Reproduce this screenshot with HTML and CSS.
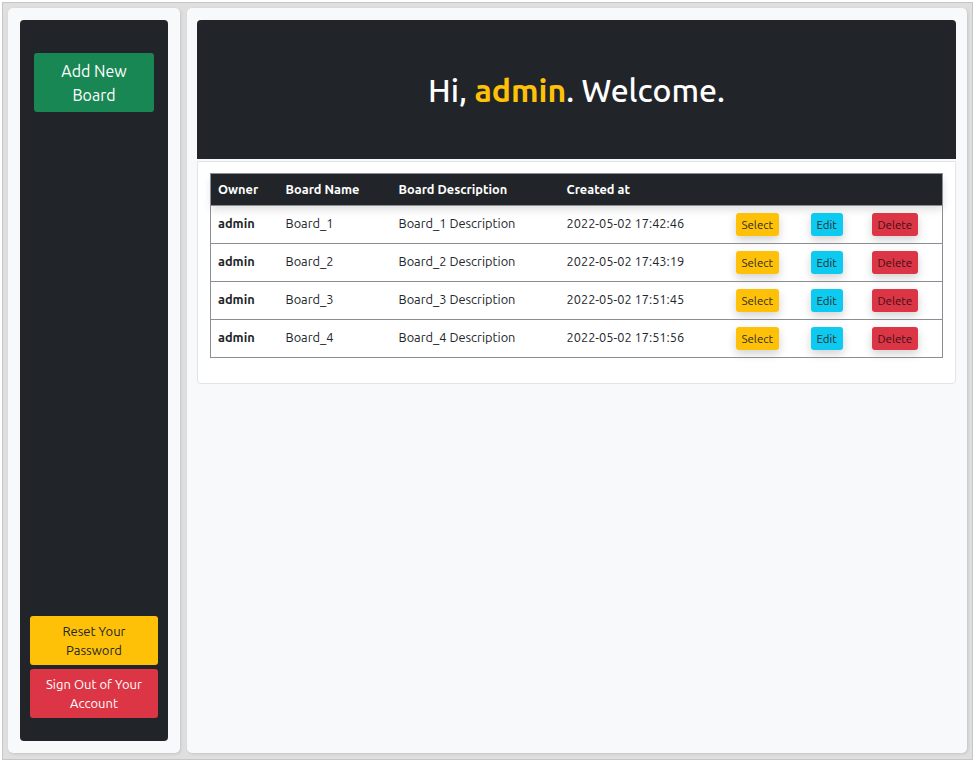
FILE: index.html
```html
<!DOCTYPE html>
<html lang="en">
<head>
<meta charset="utf-8">
<title>Boards</title>
<link rel="stylesheet" href="styles.css">
</head>
<body>
<div class="frame">
  <aside class="side-card">
    <nav class="sidebar">
      <button class="btn btn-add">Add New<br>Board</button>
      <div class="sidebar-bottom">
        <button class="btn btn-reset">Reset Your<br>Password</button>
        <button class="btn btn-signout">Sign Out of Your<br>Account</button>
      </div>
    </nav>
  </aside>
  <main class="main-card">
    <header class="hero">
      <h1 class="hero-title">Hi, <span class="hero-name">admin</span>. Welcome.</h1>
    </header>
    <section class="table-card">
      <table class="boards">
        <thead>
          <tr>
            <th class="c-owner">Owner</th>
            <th class="c-name">Board Name</th>
            <th class="c-desc">Board Description</th>
            <th class="c-date">Created at</th>
            <th class="c-sel"></th>
            <th class="c-edit"></th>
            <th class="c-del"></th>
          </tr>
        </thead>
        <tbody>
          <tr>
            <td class="owner">admin</td><td>Board_1</td><td>Board_1 Description</td><td>2022-05-02 17:42:46</td>
            <td><button class="act act-select">Select</button></td><td><button class="act act-edit">Edit</button></td><td><button class="act act-delete">Delete</button></td>
          </tr>
          <tr>
            <td class="owner">admin</td><td>Board_2</td><td>Board_2 Description</td><td>2022-05-02 17:43:19</td>
            <td><button class="act act-select">Select</button></td><td><button class="act act-edit">Edit</button></td><td><button class="act act-delete">Delete</button></td>
          </tr>
          <tr>
            <td class="owner">admin</td><td>Board_3</td><td>Board_3 Description</td><td>2022-05-02 17:51:45</td>
            <td><button class="act act-select">Select</button></td><td><button class="act act-edit">Edit</button></td><td><button class="act act-delete">Delete</button></td>
          </tr>
          <tr>
            <td class="owner">admin</td><td>Board_4</td><td>Board_4 Description</td><td>2022-05-02 17:51:56</td>
            <td><button class="act act-select">Select</button></td><td><button class="act act-edit">Edit</button></td><td><button class="act act-delete">Delete</button></td>
          </tr>
        </tbody>
      </table>
    </section>
  </main>
</div>
</body>
</html>
```
FILE: styles.css
```css
* { box-sizing: border-box; }
html, body { margin: 0; padding: 0; background: #ffffff; }
body {
  font-family: "Ubuntu", "Noto Sans", "Liberation Sans", sans-serif;
  color: #212529;
}
.frame {
  margin: 2px 3px 3px 2px;
  height: calc(100vh - 5px);
  border: 1px solid #c6c6c6;
  background: #dfdfdf;
  padding: 5px 5px 6px 5px;
  display: flex;
  gap: 7px;
}
.side-card, .main-card {
  background: #f8f9fa;
  border-radius: 5px;
  box-shadow: 1px 1px 3px rgba(0,0,0,0.12);
}
.side-card {
  width: 172px;
  flex: none;
  padding: 12px;
  display: flex;
}
.sidebar {
  flex: 1;
  background: #212529;
  border-radius: 4px;
  display: flex;
  flex-direction: column;
  justify-content: space-between;
  padding: 33px 10px 23px;
}
.btn {
  font-family: inherit;
  border: none;
  border-radius: 3px;
  cursor: pointer;
  display: block;
  width: 100%;
}
.btn-add {
  background: #198754;
  color: #ffffff;
  font-size: 16px;
  line-height: 24px;
  width: auto;
  margin: 0 4px;
  padding: 6px 8px 5px;
  height: 59px;
}
.sidebar-bottom { display: flex; flex-direction: column; gap: 4px; }
.btn-reset, .btn-signout {
  font-size: 13px;
  line-height: 19px;
  padding: 5px 6px;
  height: 49px;
}
.btn-reset { background: #ffc107; color: #212529; }
.btn-signout { background: #dc3545; color: #ffffff; }

.main-card {
  flex: 1;
  padding: 12px 11px 12px 10px;
  display: flex;
  flex-direction: column;
}
.hero {
  background: #212529;
  height: 139px;
  flex: none;
  border-radius: 4px 4px 0 0;
  display: flex;
  align-items: center;
  justify-content: center;
}
.hero-title {
  margin: 0;
  color: #ffffff;
  font-size: 32px;
  font-weight: 500;
  line-height: 1.2;
  padding-top: 1px;
}
.hero-name { color: #ffc107; font-weight: 700; }

.table-card {
  margin-top: 2px;
  background: #ffffff;
  border: 1px solid #e3e4e5;
  border-radius: 0 0 4px 4px;
  padding: 11px 12px 25px;
}
.boards {
  width: 100%;
  border-collapse: collapse;
  table-layout: fixed;
  font-size: 12.8px;
  border: 1px solid #8a8e93;
}
.boards thead tr {
  background: #212529;
  color: #ffffff;
  box-shadow: 0 4px 8px rgba(0,0,0,0.12);
}
.boards th {
  text-align: left;
  font-weight: 700;
  height: 32px;
  padding: 0 7px 1px;
  border: none;
}
.boards td {
  height: 38px;
  padding: 0 7px 4px;
  border-top: 1px solid #8a8e93;
  vertical-align: middle;
}
.boards .owner { font-weight: 700; }
.c-owner { width: 68px; }
.c-name { width: 113px; }
.c-desc { width: 168px; }
.c-date { width: 169px; }
.c-sel { width: 75px; }
.c-edit { width: 61px; }
.act {
  font-family: inherit;
  font-size: 11.5px;
  height: 23px;
  padding: 0 6px;
  border: none;
  border-radius: 3px;
  color: #2b2b2b;
  box-shadow: 0 4px 10px rgba(0,0,0,0.18);
  margin-top: 4px;
  display: block;
}
.act-select { background: #ffc107; }
.act-edit { background: #0dcaf0; }
.act-delete { background: #dc3545; color: #3a1216; }
```
